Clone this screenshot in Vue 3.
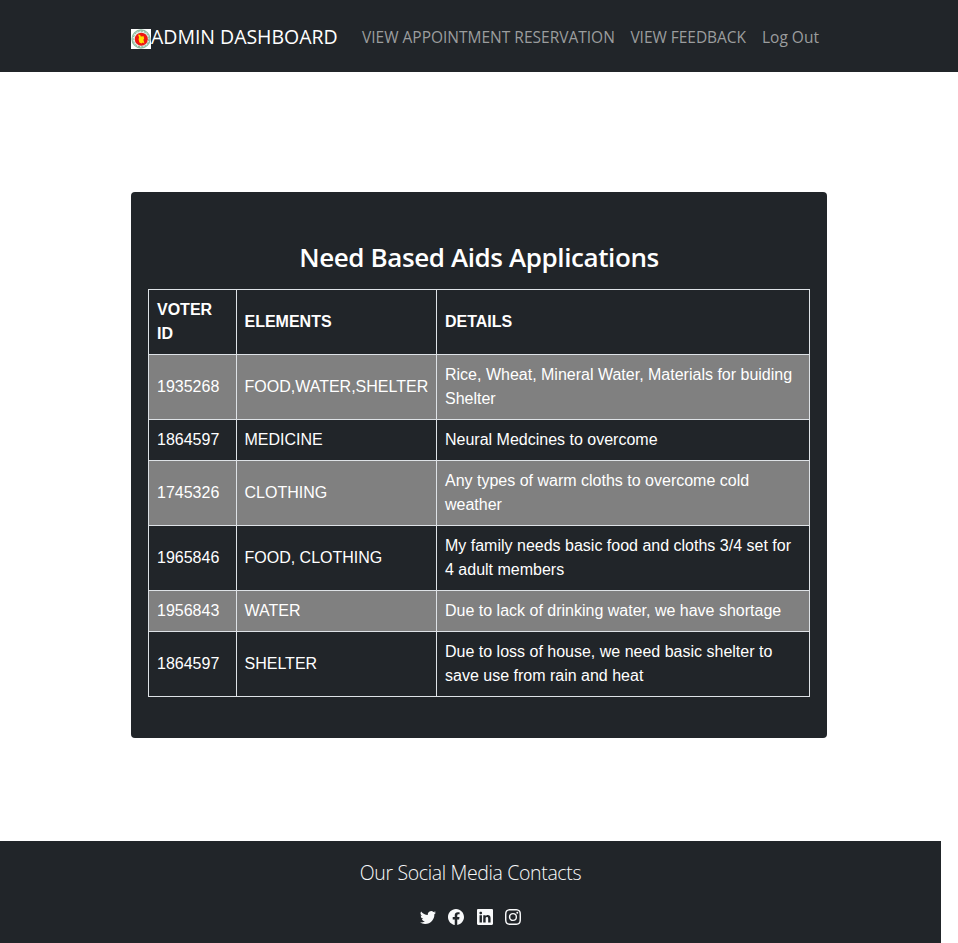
<script setup>
const links = [
  { label: 'VIEW APPOINTMENT RESERVATION', cls: 'reservation' },
  { label: 'VIEW FEEDBACK', cls: 'feedback' },
  { label: 'Log Out', cls: 'logout' },
]

const rows = [
  { id: '1935268', elements: 'FOOD,WATER,SHELTER', details: 'Rice, Wheat, Mineral Water, Materials for buiding Shelter' },
  { id: '1864597', elements: 'MEDICINE', details: 'Neural Medcines to overcome' },
  { id: '1745326', elements: 'CLOTHING', details: 'Any types of warm cloths to overcome cold weather' },
  { id: '1965846', elements: 'FOOD, CLOTHING', details: 'My family needs basic food and cloths 3/4 set for 4 adult members' },
  { id: '1956843', elements: 'WATER', details: 'Due to lack of drinking water, we have shortage' },
  { id: '1864597', elements: 'SHELTER', details: 'Due to loss of house, we need basic shelter to save use from rain and heat' },
]

const socials = [
  { name: 'Twitter', path: 'M5.026 15c6.038 0 9.341-5.003 9.341-9.334 0-.14 0-.282-.006-.422A6.685 6.685 0 0 0 16 3.542a6.658 6.658 0 0 1-1.889.518 3.301 3.301 0 0 0 1.447-1.817 6.533 6.533 0 0 1-2.087.793A3.286 3.286 0 0 0 7.875 6.03a9.325 9.325 0 0 1-6.767-3.429 3.289 3.289 0 0 0 1.018 4.382A3.323 3.323 0 0 1 .64 6.575v.045a3.288 3.288 0 0 0 2.632 3.218 3.203 3.203 0 0 1-.865.115 3.23 3.23 0 0 1-.614-.057 3.283 3.283 0 0 0 3.067 2.277A6.588 6.588 0 0 1 .78 13.58a6.32 6.32 0 0 1-.78-.045A9.344 9.344 0 0 0 5.026 15z' },
  { name: 'Facebook', path: 'M16 8.049c0-4.446-3.582-8.05-8-8.05C3.58 0-.002 3.603-.002 8.05c0 4.017 2.926 7.347 6.75 7.951v-5.625h-2.03V8.05H6.75V6.275c0-2.017 1.195-3.131 3.022-3.131.876 0 1.791.157 1.791.157v1.98h-1.009c-.993 0-1.303.621-1.303 1.258v1.51h2.218l-.354 2.326H9.25V16c3.824-.604 6.75-3.934 6.75-7.951z' },
  { name: 'LinkedIn', path: 'M0 1.146C0 .513.526 0 1.175 0h13.65C15.474 0 16 .513 16 1.146v13.708c0 .633-.526 1.146-1.175 1.146H1.175C.526 16 0 15.487 0 14.854V1.146zm4.943 12.248V6.169H2.542v7.225h2.401zm-1.2-8.212c.837 0 1.358-.554 1.358-1.248-.015-.709-.52-1.248-1.342-1.248-.822 0-1.359.54-1.359 1.248 0 .694.521 1.248 1.327 1.248h.016zm4.908 8.212V9.359c0-.216.016-.432.08-.586.173-.431.568-.878 1.232-.878.869 0 1.216.662 1.216 1.634v3.865h2.401V9.25c0-2.22-1.184-3.252-2.764-3.252-1.274 0-1.845.7-2.165 1.193v.025h-.016a5.54 5.54 0 0 1 .016-.025V6.169h-2.4c.03.678 0 7.225 0 7.225h2.4z' },
  { name: 'Instagram', path: 'M8 0C5.829 0 5.556.01 4.703.048 3.85.088 3.269.222 2.76.42a3.917 3.917 0 0 0-1.417.923A3.927 3.927 0 0 0 .42 2.76C.222 3.268.087 3.85.048 4.7.01 5.555 0 5.827 0 8.001c0 2.172.01 2.444.048 3.297.04.852.174 1.433.372 1.942.205.526.478.972.923 1.417.444.445.89.719 1.416.923.51.198 1.09.333 1.942.372C5.555 15.99 5.827 16 8 16s2.444-.01 3.298-.048c.851-.04 1.434-.174 1.943-.372a3.916 3.916 0 0 0 1.416-.923c.445-.445.718-.891.923-1.417.197-.509.332-1.09.372-1.942C15.99 10.445 16 10.173 16 8s-.01-2.445-.048-3.299c-.04-.851-.175-1.433-.372-1.941a3.926 3.926 0 0 0-.923-1.417A3.911 3.911 0 0 0 13.24.42c-.51-.198-1.092-.333-1.943-.372C10.443.01 10.172 0 7.998 0h.003zm-.717 1.442h.718c2.136 0 2.389.007 3.232.046.78.035 1.204.166 1.486.275.373.145.64.319.92.599.28.28.453.546.598.92.11.281.24.705.275 1.485.039.843.047 1.096.047 3.231s-.008 2.389-.047 3.232c-.035.78-.166 1.203-.275 1.485a2.47 2.47 0 0 1-.599.919c-.28.28-.546.453-.92.598-.28.11-.704.24-1.485.276-.843.038-1.096.047-3.232.047s-2.39-.009-3.233-.047c-.78-.036-1.203-.166-1.485-.276a2.478 2.478 0 0 1-.92-.598 2.48 2.48 0 0 1-.6-.92c-.109-.281-.24-.705-.275-1.485-.038-.843-.046-1.096-.046-3.233 0-2.136.008-2.388.046-3.231.036-.78.166-1.204.276-1.486.145-.373.319-.64.599-.92.28-.28.546-.453.92-.598.282-.11.705-.24 1.485-.276.738-.034 1.024-.044 2.515-.045v.002zm4.988 1.328a.96.96 0 1 0 0 1.92.96.96 0 0 0 0-1.92zm-4.27 1.122a4.109 4.109 0 1 0 0 8.217 4.109 4.109 0 0 0 0-8.217zm0 1.441a2.667 2.667 0 1 1 0 5.334 2.667 2.667 0 0 1 0-5.334z' },
]
</script>

<template>
  <div class="page">
    <nav class="navbar">
      <a class="brand">
        <svg class="seal" viewBox="0 0 20 20" width="20" height="20" aria-hidden="true">
          <rect width="20" height="20" fill="#fff" />
          <circle cx="10" cy="10" r="9" fill="#e3efe7" stroke="#8fbda0" stroke-width="1.3" />
          <circle cx="10" cy="10" r="7.8" fill="none" stroke="#7fb394" stroke-width="1" stroke-dasharray="2 1.3" />
          <circle cx="10.3" cy="10.2" r="6.5" fill="#ee1712" />
          <path d="M7 5.6 9.2 6 9.8 7.6l2.9-.4.4 2.6-.7 1 1 3.6-1.6-.9-1.2.9-2.2-1-.8-2.8.4-2.3z" fill="#ffe000" />
        </svg>
        <span class="brand-text">ADMIN DASHBOARD</span>
      </a>
      <ul class="links">
        <li v-for="link in links" :key="link.label"><a class="link" :class="link.cls">{{ link.label }}</a></li>
      </ul>
    </nav>

    <main class="card">
      <h3 class="title"><span>Need Based Aids Applications</span></h3>
      <table class="aids">
        <colgroup><col class="c-id"><col class="c-elements"><col></colgroup>
        <thead>
          <tr><th>VOTER ID</th><th>ELEMENTS</th><th>DETAILS</th></tr>
        </thead>
        <tbody>
          <tr v-for="(row, i) in rows" :key="i">
            <td>{{ row.id }}</td>
            <td>{{ row.elements }}</td>
            <td>{{ row.details }}</td>
          </tr>
        </tbody>
      </table>
    </main>

    <footer class="footer">
      <p class="contacts">Our Social Media Contacts</p>
      <div class="socials">
        <svg v-for="s in socials" :key="s.name" viewBox="0 0 16 16" width="16" height="16" fill="currentColor" :aria-label="s.name">
          <path :d="s.path" />
        </svg>
      </div>
    </footer>
  </div>
</template>

<style>
body {
  margin: 0;
  background: #fff;
}
</style>

<style scoped>
.page {
  height: 943px;
  overflow: hidden;
  font-family: "Open Sans", "Noto Sans", sans-serif;
  color: #fff;
}

.navbar {
  box-sizing: border-box;
  height: 72px;
  padding: 1px 131px 0;
  display: flex;
  align-items: center;
  background: #212529;
  white-space: nowrap;
}

.brand {
  display: flex;
  width: 231px;
  height: 30px;
}

.seal {
  flex: none;
  margin-top: 7px;
}

.brand-text {
  font-size: 19.5px;
  line-height: 30px;
  letter-spacing: -0.03px;
}

.links {
  display: flex;
  gap: 16px;
  margin: 0;
  padding: 0;
  list-style: none;
}

.link {
  display: block;
  font-size: 15.5px;
  line-height: 24px;
  color: #9b9d9e;
}

.reservation {
  width: 252.4px;
}

.feedback {
  width: 115.6px;
  letter-spacing: -0.03px;
}

.card {
  box-sizing: border-box;
  width: 696px;
  height: 546px;
  margin: 120px 0 0 131px;
  padding: 48px 17px 0;
  border-radius: 4px;
  background: #212529;
}

.title {
  margin: 0 0 15px;
  text-align: center;
  font-size: 26px;
  font-weight: 600;
  line-height: 34px;
  letter-spacing: -0.4px;
  white-space: nowrap;
}

.aids {
  width: 662px;
  table-layout: fixed;
  border-collapse: collapse;
  font: 16px/24px "Liberation Sans", Arial, sans-serif;
}

.c-id {
  width: 88px;
}

.c-elements {
  width: 200px;
}

.aids th,
.aids td {
  padding: 8px;
  border: 1px solid #dee2e6;
  text-align: left;
  vertical-align: middle;
}

.aids th:nth-child(2),
.aids td:nth-child(2) {
  padding-left: 7.5px;
}

.aids tbody tr:nth-child(odd) {
  background: #808080;
}

.footer {
  box-sizing: border-box;
  width: 941px;
  height: 102px;
  margin-top: 103px;
  padding-top: 17px;
  background: #212529;
  color: #f8f9fa;
  text-align: center;
}

.contacts {
  margin: 0;
  font-size: 19.5px;
  font-weight: 300;
  line-height: 30px;
  letter-spacing: -0.36px;
}

.socials {
  display: flex;
  justify-content: center;
  gap: 12.4px;
  margin-top: 21px;
}
</style>
